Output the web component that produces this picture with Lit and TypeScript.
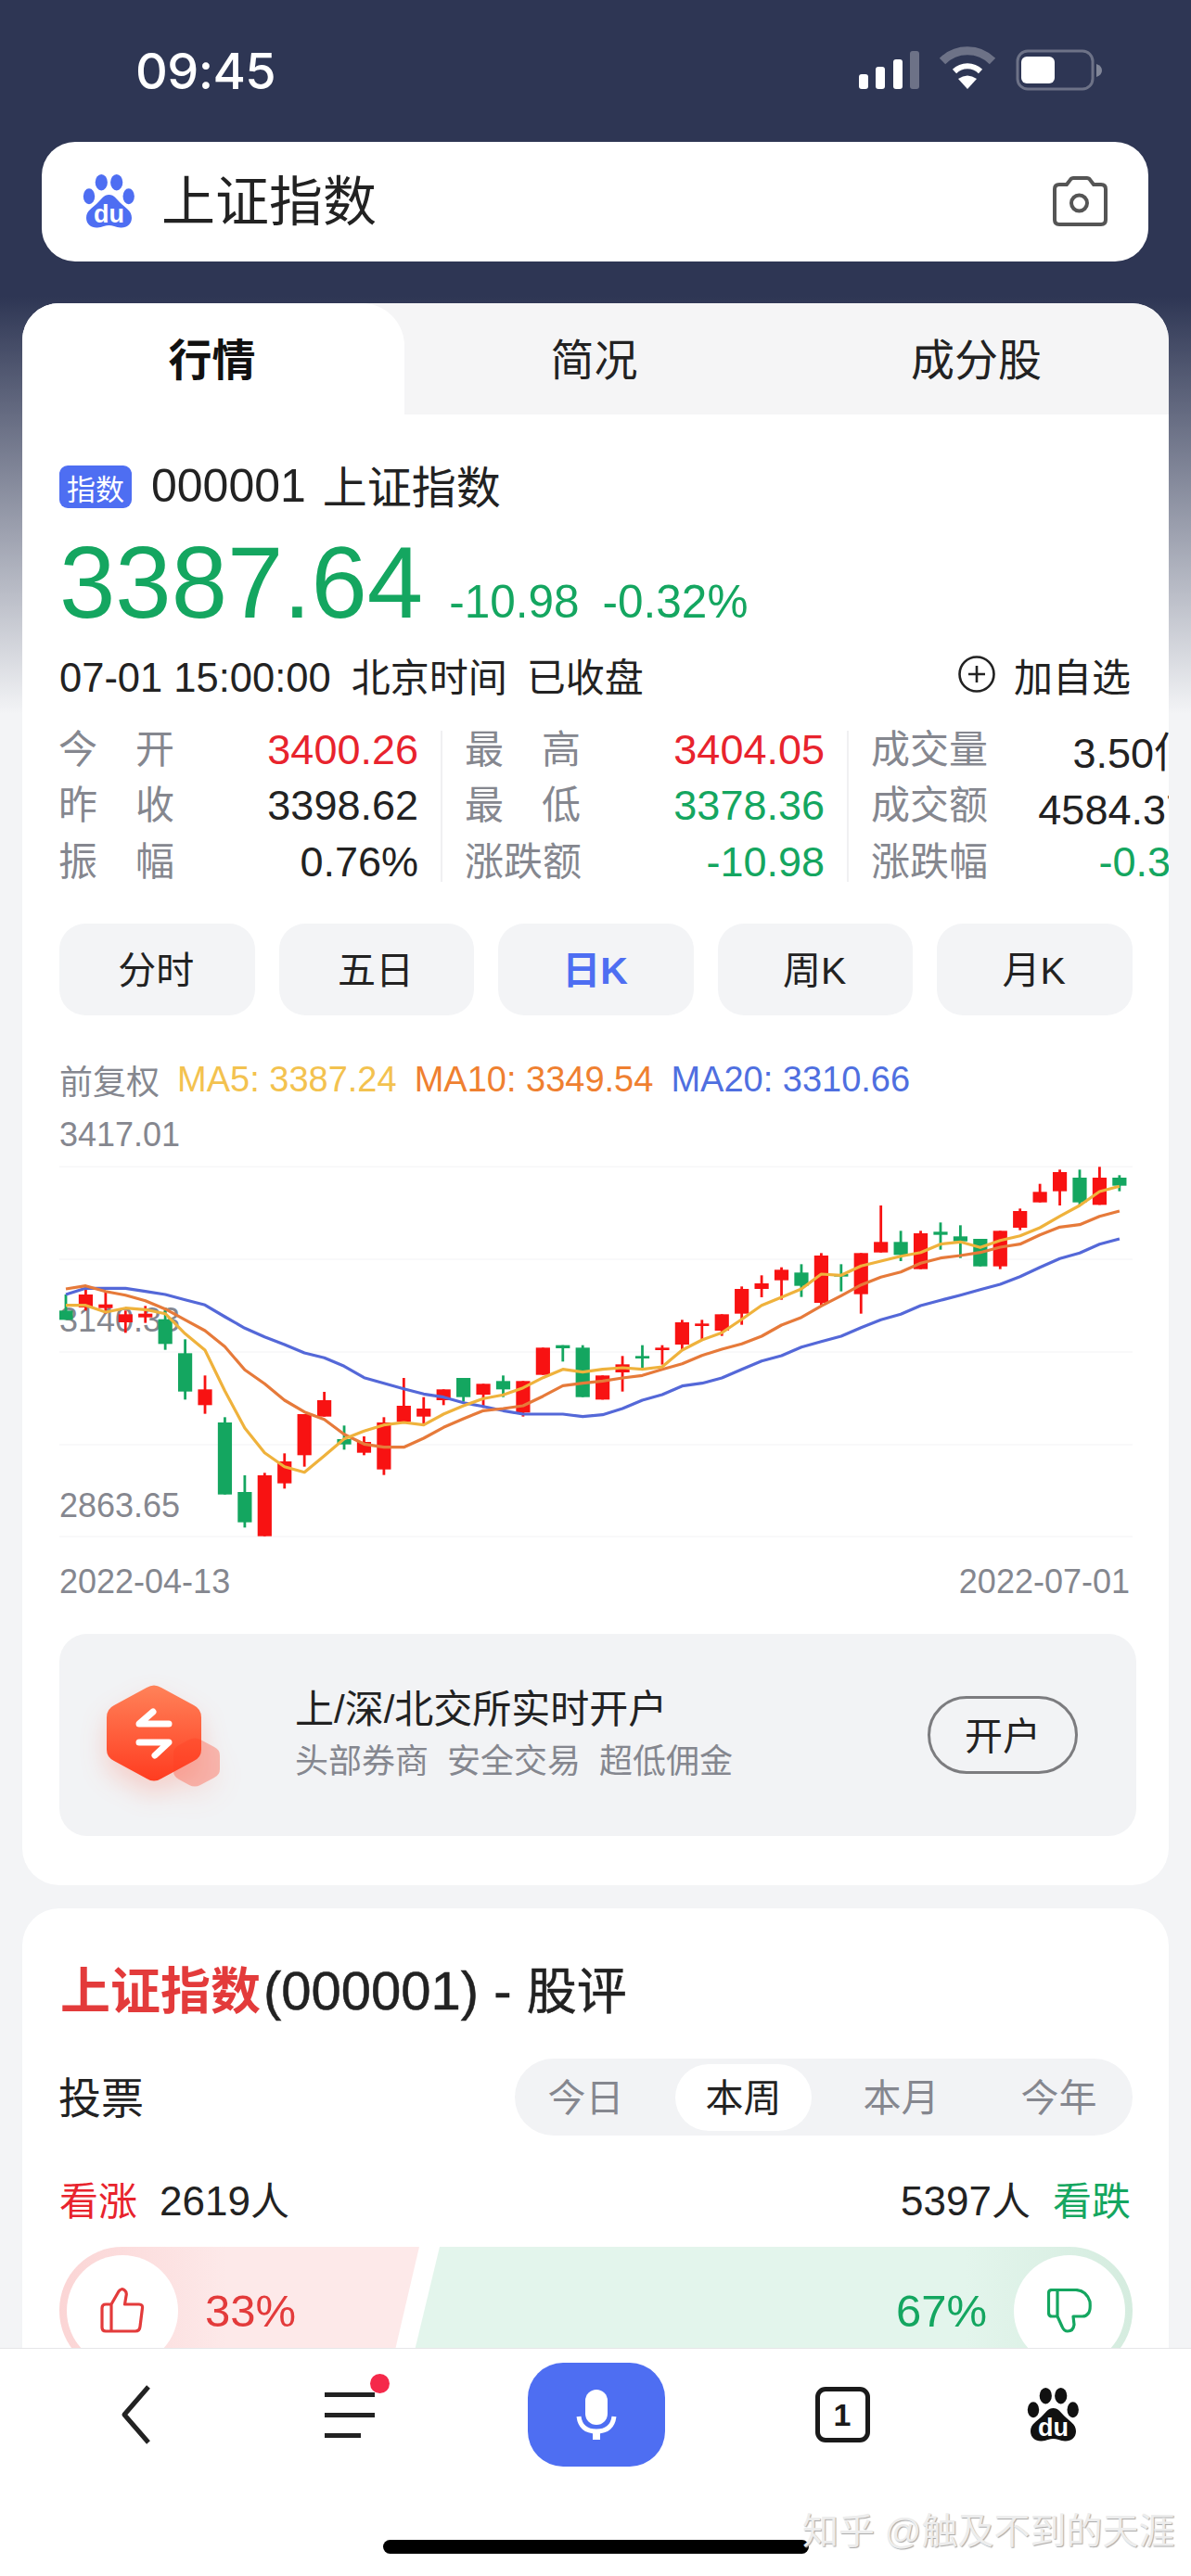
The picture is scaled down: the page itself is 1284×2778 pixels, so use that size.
import { LitElement, html, css, svg } from "lit";
import { customElement } from "lit/decorators.js";

const RED = "#f81212";
const GREEN = "#14a660";
// zoom-space samples: [wickTop, wickBottom, bodyTop, bodyBottom, up?]
const C: [number, number, number, number, number][] = [
  [648,730,700,730,0],[630,700,648,690,1],[640,710,680,692,1],[700,772,712,738,1],[685,740,710,722,1],
  [690,827,728,808,0],[793,988,838,962,0],[910,1034,955,1006,1],[1045,1295,1062,1295,0],[1233,1402,1287,1385,0],
  [1225,1430,1233,1430,1],[1162,1276,1188,1259,1],[1035,1205,1035,1168,1],[963,1043,990,1043,1],[1072,1150,1116,1133,0],
  [1107,1168,1125,1160,1],[1045,1232,1062,1214,1],[918,1060,1008,1060,1],[980,1066,1017,1043,1],[955,1006,955,990,1],
  [918,995,918,980,0],[937,1015,937,972,1],[910,980,928,955,0],[928,1043,928,1030,1],[820,908,820,908,1],
  [812,865,812,822,0],[812,980,820,980,0],[910,988,910,988,1],[847,962,874,900,1],[812,890,847,855,0],
  [812,875,820,828,1],[730,828,738,810,1],[730,792,742,750,1],[712,782,712,765,1],[622,746,630,710,1],
  [586,657,612,630,1],[560,665,568,602,1],[550,656,577,620,0],[514,685,522,675,1],[550,638,582,590,0],
  [514,710,514,647,1],[360,512,478,512,1],[442,540,478,520,0],[442,566,450,566,1],[415,503,445,455,0],
  [424,530,460,476,0],[468,557,468,557,0],[442,566,442,557,1],[370,440,378,432,1],[290,350,316,350,1],
  [244,360,252,314,1],[244,358,270,350,0],[235,358,270,358,1],[262,314,270,296,0],
];
const MA5 = [683,683,705,692,697,710,775,828,960,1080,1160,1205,1223,1170,1115,1090,1070,1062,1070,1035,1008,985,973,950,917,890,899,890,885,890,882,828,795,772,728,683,657,630,582,586,556,540,524,512,485,478,496,473,458,432,395,360,315,298];
const MA10 = [630,620,638,650,668,695,730,765,817,892,937,990,1028,1052,1100,1132,1142,1142,1113,1078,1050,1024,1017,1008,977,943,935,928,918,910,890,872,845,825,808,783,747,722,685,652,617,592,575,547,530,522,512,495,485,455,430,422,395,378];
const MA20 = [648,628,628,628,638,648,665,682,720,757,785,810,837,853,880,917,935,953,970,980,998,1010,1024,1035,1035,1035,1043,1037,1017,990,972,944,935,918,890,863,846,818,800,783,755,730,712,684,667,650,632,615,590,560,532,514,485,468];

const cx = (i: number) => 40 + (81 + 56 * i) / 2.613;
const cy = (z: number) => 1180 + z / 3;
const pts = (a: number[]) => a.map((z, i) => `${cx(i).toFixed(1)},${cy(z).toFixed(1)}`).join(" ");

const paw = (color: string) => html`<svg viewBox="0 0 80 75" width="80" height="75">
  <g fill=${color}>
    <ellipse cx="29.3" cy="16.7" rx="6.6" ry="8.7"></ellipse>
    <ellipse cx="45.7" cy="16.7" rx="6.6" ry="8.7"></ellipse>
    <ellipse cx="16" cy="31.7" rx="6.2" ry="8.5"></ellipse>
    <ellipse cx="58.7" cy="31.7" rx="6.2" ry="8.5"></ellipse>
    <path d="M37.5 30C43 30 46 35 50 39C55 44 62 47 62 55C62 62 56 66 50 65.5C45 65 41 63 37.5 63C34 63 30 65 25 65.5C19 66 13 62 13 55C13 47 20 44 25 39C29 35 32 30 37.5 30Z"></path>
  </g>
  <text x="37.5" y="60" text-anchor="middle" fill="#fff" font-family="Liberation Sans" font-weight="700" font-size="27">du</text>
</svg>`;

@customElement("app-root")
export class AppRoot extends LitElement {
  static styles = css`
    :host { display: block; width: 1284px; height: 2778px; overflow: hidden;
      font-family: "Liberation Sans", "Noto Sans CJK SC", sans-serif; color: #222; }
    .page { position: relative; height: 2778px; display: flex; flex-direction: column;
      background: linear-gradient(#2e3654 0, #2e3654 320px, #f3f4f6 770px); }
    .main { flex: 1; min-height: 0; overflow: hidden; }
    .status { height: 153px; display: flex; align-items: flex-start; justify-content: space-between; box-sizing: border-box; padding: 48px 89px 0 146px; }
    .time { font-family: Inter, "Liberation Sans", sans-serif; font-weight: 500; font-size: 54px; line-height: 54px; letter-spacing: -0.6px; color: #fff; padding-top: 2px; }
    .search { margin: 0 46px 45px 45px; height: 129px; background: #fff; border-radius: 36px; display: flex; align-items: center; padding: 0 28px 0 35px; }
    .search .q { flex: 1; font-size: 58px; margin-left: 14px; line-height: 70px; color: #222; }
    .card { margin: 0 24px; background: #fff; border-radius: 40px; overflow: hidden; }
    .card.first { height: 1706px; }
    .card.second { margin-top: 25px; padding: 54px 39px 60px 41px; }
    .tabs { display: flex; height: 120px; background: #f5f5f6; }
    .tab { flex: 1; display: flex; align-items: center; justify-content: center; font-size: 47px; color: #222; padding: 0 3px 6px 0; box-sizing: border-box; }
    .tab.on { background: #fff; border-top-right-radius: 46px; font-weight: 700; color: #111; }
    .body { padding: 55px 39px 0 40px; }
    .head { display: flex; align-items: center; height: 46px; font-size: 48px; gap: 21px; color: #222; }
    .head .code { font-size: 50px; margin-right: -3px; padding-bottom: 2px; }
    .head .nm { padding-bottom: 6px; }
    .badge { width: 78px; height: 46px; background: #4e6ef2; color: #fff; border-radius: 9px; font-size: 31px; display: flex; align-items: center; justify-content: center; }
    .price { display: flex; align-items: baseline; margin-top: 21px; height: 122px; line-height: 120px; color: #14a660; font-size: 49.5px; }
    .price .big { font-size: 108.5px; margin-right: 28px; }
    .price .pct { margin-left: 25px; }
    .meta { display: flex; align-items: center; justify-content: space-between; margin-top: 14px; height: 44px; font-size: 42px; color: #222; padding-right: 2px; }
    .when { display: flex; gap: 21px; align-items: baseline; }
    .when .date { font-size: 43.5px; margin-right: 1px; }
    .add { display: flex; align-items: center; gap: 20px; }
    .stats { display: flex; margin-top: 39px; height: 163px; }
    .col { flex: none; width: 387px; display: flex; flex-direction: column; gap: 18.5px; padding-right: 24px; margin-right: 25px; border-right: 2px solid #f0f0f2; box-sizing: content-box; }
    .col:last-child { border-right: none; }
    .row { height: 42px; display: flex; justify-content: space-between; align-items: center; font-size: 45px; white-space: nowrap; }
    .row .val { padding-bottom: 1px; }
    .row .val.q { margin-right: -7px; }
    .lab { width: 125px; margin-left: -1px; box-sizing: content-box; font-size: 42px; line-height: 50px; padding-bottom: 1px; color: #85878f; text-align: justify; text-align-last: justify; }
    .r { color: #e8232d; } .g { color: #14a660; }
    .periods { display: flex; gap: 26px; margin-top: 45px; }
    .p { flex: 1; height: 99px; box-sizing: border-box; padding: 0 2px 6px 0; background: #f3f4f6; border-radius: 28px; display: flex; align-items: center; justify-content: center; font-size: 41px; color: #222; }
    .p.on { color: #4e6ef2; font-weight: 700; }
    .legend { display: flex; align-items: center; gap: 19px; margin-top: 46px; height: 44px; padding-top: 2px; box-sizing: border-box; font-size: 38px; white-space: nowrap; }
    .legend .fq { font-size: 36px; color: #85878f; }
    .m5 { color: #f3c24f; } .m10 { color: #ef8030; } .m20 { color: #4f6fe0; }
    .chart { position: relative; height: 495px; }
    .chart svg { position: absolute; left: 0; top: 0; display: block; }
    .axis { position: absolute; left: 0; font-size: 36px; line-height: 40px; color: #85878f; }
    .a1 { top: 19px; } .a2 { top: 219px; } .a3 { top: 419px; }
    .dates { display: flex; justify-content: space-between; margin-top: 6px; height: 40px; line-height: 40px; font-size: 36px; color: #85878f; padding-right: 3px; }
    .promo { margin: 36px -4px 0 0; height: 218px; background: #f2f3f5; border-radius: 30px; display: flex; align-items: center; padding: 0 63px 0 26px; }
    .promo .ico { flex: none; margin-top: 8px; overflow: visible; filter: drop-shadow(0 14px 14px rgba(255, 80, 50, 0.22)); }
    .ptext { flex: 1; margin-left: 58px; }
    .pt { font-size: 42px; line-height: 50px; color: #222; }
    .ps { font-size: 36px; line-height: 46px; color: #85878f; margin-top: 8px; display: flex; gap: 20px; }
    .open { width: 162px; height: 84px; box-sizing: border-box; border: 3px solid #7c7c7f; border-radius: 42px; display: flex; align-items: center; justify-content: center; padding-bottom: 4px; font-size: 41px; color: #222; }
    .title { height: 70px; line-height: 70px; font-size: 54px; color: #222; white-space: nowrap; display: flex; align-items: baseline; }
    .title b { color: #e33b3b; font-weight: 700; }
    .title .code { font-size: 58px; -webkit-text-stroke: 0.5px #222; white-space: pre; margin-left: 3px; }
    .title .cn { -webkit-text-stroke: 0.5px #222; }
    .vote { display: flex; align-items: center; justify-content: space-between; margin-top: 38px; height: 83px; }
    .vote .vt { font-size: 46px; margin-left: -2px; padding-bottom: 6px; }
    .seg { width: 666px; height: 83px; box-sizing: border-box; background: #f2f3f5; border-radius: 42px; display: flex; align-items: center; gap: 23px; padding: 0 0 0 3px; }
    .si { flex: none; width: 147px; height: 72px; box-sizing: border-box; padding-bottom: 5px; border-radius: 36px; display: flex; align-items: center; justify-content: center; font-size: 41px; color: #85878f; }
    .si.on { background: #fff; color: #222; }
    .counts { display: flex; align-items: center; justify-content: space-between; margin: 42px 0 0 -1px; height: 50px; font-size: 42px; padding-right: 2px; }
    .counts > div { display: flex; gap: 24px; align-items: baseline; }
    .n { font-size: 44px; }
    .n i { font-style: normal; font-size: 42px; }
    .bar { display: flex; margin: 28px 0 0 -1px; height: 137px; width: 1157px; }
    .bl { flex: none; width: 388px; height: 137px; box-sizing: border-box; border-radius: 68px 0 0 68px; background: linear-gradient(90deg, #fbd5d5, #fde9e9 180px); clip-path: polygon(0 0, 100% 0, 356px 100%, 0 100%); display: flex; align-items: center; padding-left: 8px; font-size: 49px; color: #e33b3b; gap: 29px; }
    .br { flex: none; width: 780px; height: 137px; margin-left: -11px; box-sizing: border-box; border-radius: 0 68px 68px 0; background: linear-gradient(270deg, #d5ecdf, #e3f5ec 180px); clip-path: polygon(33px 0, 100% 0, 100% 100%, 0 100%); display: flex; align-items: center; justify-content: flex-end; padding-right: 8px; font-size: 49px; color: #14a660; gap: 29px; }
    .bub { flex: none; width: 120px; height: 120px; border-radius: 50%; background: #fff; display: flex; align-items: center; justify-content: center; }
    .nav { position: relative; flex: none; height: 246px; box-sizing: border-box; background: #fff; border-top: 1px solid #e6e6e8; padding-top: 15px; display: flex; flex-direction: column; align-items: center; }
    .icons { width: 1284px; display: grid; grid-template-columns: 292px 170px 362px 168px 292px; height: 112px; align-items: center; justify-items: center; }
    .menu { position: relative; width: 54px; display: flex; flex-direction: column; gap: 17px; }
    .menu i { display: block; height: 5px; background: #222; }
    .menu i:last-of-type { width: 39px; }
    .dot { position: absolute; left: 49px; top: -20px; width: 21px; height: 21px; border-radius: 50%; background: #f5294a; }
    .mic { width: 148px; height: 112px; border-radius: 38px; background: #4e6ef2; display: flex; align-items: center; justify-content: center; }
    .count { width: 59px; height: 60px; box-sizing: border-box; border: 5px solid #1a1a1a; border-radius: 11px; display: flex; align-items: center; justify-content: center; font-size: 34px; font-weight: 700; color: #1a1a1a; }
    .home { margin-top: auto; margin-bottom: 24px; width: 459px; height: 15px; border-radius: 8px; background: #000; }
    .mark { position: absolute; left: 865px; top: 173px; font-size: 39px; line-height: 48px; color: #ededed; text-shadow: 1px 1px 1px #a8a8a8; white-space: nowrap; }
  `;

  private chart() {
    return html`<svg viewBox="64 1185 1157 495" width="1157" height="495">
      ${[1258.3, 1358, 1458, 1558, 1657].map((y) => svg`<line x1="64" x2="1221" y1=${y} y2=${y} stroke="#f7f7f8" stroke-width="1.5"></line>`)}
      ${C.map((c, i) => {
        const col = c[4] ? RED : GREEN;
        return svg`<line x1=${cx(i)} x2=${cx(i)} y1=${cy(c[0])} y2=${cy(c[1])} stroke=${col} stroke-width="2.8"></line>
          <rect x=${cx(i) - 7.6} width="15.2" y=${cy(c[2])} height=${Math.max((c[3] - c[2]) / 3, 2.5)} fill=${col}></rect>`;
      })}
      <polyline points=${pts(MA20)} fill="none" stroke="#5468d8" stroke-width="3.2" stroke-linejoin="round"></polyline>
      <polyline points=${pts(MA10)} fill="none" stroke="#e67a3a" stroke-width="3.2" stroke-linejoin="round"></polyline>
      <polyline points=${pts(MA5)} fill="none" stroke="#efb23c" stroke-width="3.2" stroke-linejoin="round"></polyline>
    </svg>`;
  }

  private stat(rows: [string, string, string][]) {
    return html`<div class="col">${rows.map(([l, v, c]) => html`<div class="row"><span class="lab">${l}</span><span class="val ${c}">${v}</span></div>`)}</div>`;
  }

  render() {
    return html`<div class="page">
      <div class="main">
        <div class="status">
          <div class="time">09:45</div>
          <svg viewBox="0 0 275 54" width="275" height="54">
            <g fill="#fff">
              <rect x="6" y="32" width="10" height="16" rx="3"></rect>
              <rect x="24" y="24" width="10" height="24" rx="3"></rect>
              <rect x="43" y="16" width="10" height="32" rx="3"></rect>
              <rect x="61" y="7" width="10" height="41" rx="3" opacity="0.3"></rect>
              <path d="M113 37Q123 30 133 37L123 48Z"></path>
            </g>
            <path d="M96 18A38 38 0 0 1 150 18" fill="none" stroke="#fff" stroke-width="9" opacity="0.3"></path>
            <path d="M109 29A20 20 0 0 1 137 29" fill="none" stroke="#fff" stroke-width="6"></path>
            <rect x="177" y="7" width="81" height="41" rx="11" fill="none" stroke="#fff" stroke-width="3" opacity="0.3"></rect>
            <rect x="181" y="13" width="36" height="29" rx="6" fill="#fff"></rect>
            <path d="M262 21Q268 23 268 28Q268 33 262 35Z" fill="#fff" opacity="0.4"></path>
          </svg>
        </div>
        <div class="search">
          ${paw("#4e6ef2")}
          <div class="q">上证指数</div>
          <svg viewBox="0 0 90 75" width="90" height="75">
            <path d="M22 19H30L34.5 13Q35.5 12 37 12H52Q53.5 12 54.5 13L59 19H67Q72 19 72 24V57Q72 62 67 62H22Q17 62 17 57V24Q17 19 22 19Z" fill="none" stroke="#555" stroke-width="4"></path>
            <circle cx="43.5" cy="39" r="8.5" fill="none" stroke="#555" stroke-width="4"></circle>
          </svg>
        </div>
        <div class="card first">
          <div class="tabs">
            <div class="tab on">行情</div>
            <div class="tab">简况</div>
            <div class="tab">成分股</div>
          </div>
          <div class="body">
            <div class="head"><span class="badge">指数</span><span class="code">000001</span><span class="nm">上证指数</span></div>
            <div class="price"><span class="big">3387.64</span><span>-10.98</span><span class="pct">-0.32%</span></div>
            <div class="meta">
              <span class="when"><span class="date">07-01 15:00:00</span><span>北京时间</span><span>已收盘</span></span>
              <span class="add">
                <svg viewBox="0 0 40 40" width="40" height="40"><circle cx="20" cy="20" r="18.5" fill="none" stroke="#222" stroke-width="2.6"></circle><path d="M20 11V29M11 20H29" stroke="#222" stroke-width="2.6"></path></svg>
                加自选
              </span>
            </div>
            <div class="stats">
              ${this.stat([["今开", "3400.26", "r"], ["昨收", "3398.62", ""], ["振幅", "0.76%", ""]])}
              ${this.stat([["最高", "3404.05", "r"], ["最低", "3378.36", "g"], ["涨跌额", "-10.98", "g"]])}
              ${this.stat([["成交量", "3.50亿手", "q"], ["成交额", "4584.37亿", ""], ["涨跌幅", "-0.32%", "g"]])}
            </div>
            <div class="periods">
              <div class="p">分时</div><div class="p">五日</div><div class="p on">日K</div><div class="p">周K</div><div class="p">月K</div>
            </div>
            <div class="legend">
              <span class="fq">前复权</span>
              <span class="m5">MA5: 3387.24</span>
              <span class="m10">MA10: 3349.54</span>
              <span class="m20">MA20: 3310.66</span>
            </div>
            <div class="chart">
              <div class="axis a1">3417.01</div>
              <div class="axis a2">3140.33</div>
              <div class="axis a3">2863.65</div>
              ${this.chart()}
            </div>
            <div class="dates"><span>2022-04-13</span><span>2022-07-01</span></div>
            <div class="promo">
              <svg class="ico" viewBox="0 0 170 150" width="170" height="150">
                <defs><linearGradient id="hex" x1="0" y1="0" x2="0" y2="1"><stop offset="0" stop-color="#ff8259"></stop><stop offset="1" stop-color="#ff3c20"></stop></linearGradient></defs>
                <path d="M68 20Q76 15 84 20L119 39Q127 43 127 52V87Q127 95 119 99L84 118Q76 123 68 118L33 99Q25 95 25 87V52Q25 43 33 39Z" fill="url(#hex)"></path>
                <path d="M114 76Q120 73 126 76L141 84Q147 87 147 93V108Q147 114 141 117L126 125Q120 128 114 125L103 119Q97 116 97 110V91Q97 85 103 82Z" fill="#ff3c20" opacity="0.33"></path>
                <path d="M92 59H60L75 46M60 79H92L77 93" fill="none" stroke="#fff" stroke-width="7" stroke-linecap="round" stroke-linejoin="round"></path>
              </svg>
              <div class="ptext">
                <div class="pt">上/深/北交所实时开户</div>
                <div class="ps"><span>头部券商</span><span>安全交易</span><span>超低佣金</span></div>
              </div>
              <div class="open">开户</div>
            </div>
          </div>
        </div>
        <div class="card second">
          <div class="title"><b>上证指数</b><span class="code">(000001) - </span><span class="cn">股评</span></div>
          <div class="vote">
            <div class="vt">投票</div>
            <div class="seg"><div class="si">今日</div><div class="si on">本周</div><div class="si">本月</div><div class="si">今年</div></div>
          </div>
          <div class="counts">
            <div><span class="r">看涨</span><span class="n">2619<i>人</i></span></div>
            <div><span class="n">5397<i>人</i></span><span class="g">看跌</span></div>
          </div>
          <div class="bar">
            <div class="bl">
              <div class="bub">
                <svg viewBox="0 0 48 50" width="48" height="50"><path d="M12 18L20 4Q23 0 26.5 3Q29 5 28 9L26.5 18H42Q46 18 45.5 22L43 42Q42.5 47 38 47H6Q2 47 2 43V22Q2 18 6 18ZM12 18V47" fill="none" stroke="#e33b3b" stroke-width="3.2" stroke-linejoin="round"></path></svg>
              </div>
              33%
            </div>
            <div class="br">
              67%
              <div class="bub">
                <svg viewBox="0 0 48 48" width="48" height="48"><path d="M5 1.5H31Q42 2 46 14Q47 24 44 27Q42 30 38 30H28L29 39Q28 46 22 46Q18 46 16 41L11 30H5Q1.5 30 1.5 26V5Q1.5 1.5 5 1.5ZM11 1.5V30" fill="none" stroke="#14a660" stroke-width="3.2" stroke-linejoin="round"></path></svg>
              </div>
            </div>
          </div>
        </div>
      </div>
      <div class="nav">
        <div class="icons">
          <svg viewBox="0 0 34 64" width="34" height="64"><path d="M31 2L5 32L31 62" fill="none" stroke="#222" stroke-width="5" stroke-linejoin="round"></path></svg>
          <div class="menu"><i></i><i></i><i></i><span class="dot"></span></div>
          <div class="mic">
            <svg viewBox="0 0 44 54" width="44" height="54">
              <rect x="10" y="0" width="24" height="38" rx="12" fill="#fff"></rect>
              <path d="M3 29Q5 45 22 45Q39 45 41 29" fill="none" stroke="#fff" stroke-width="5"></path>
              <path d="M22 45V54" stroke="#fff" stroke-width="8"></path>
            </svg>
          </div>
          <div class="count">1</div>
          ${paw("#111")}
        </div>
        <div class="home"></div>
        <div class="mark">知乎 @触及不到的天涯</div>
      </div>
    </div>`;
  }
}
